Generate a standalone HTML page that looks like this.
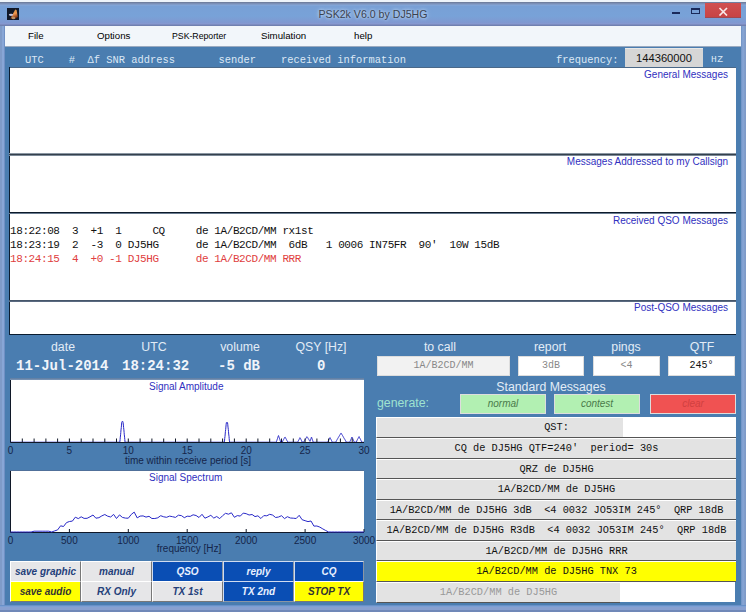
<!DOCTYPE html>
<html><head><meta charset="utf-8">
<style>
*{margin:0;padding:0;box-sizing:border-box}
html,body{width:746px;height:612px;overflow:hidden;background:linear-gradient(90deg,#7F9BC8 0,#7F9BC8 2px,#88A6D6 2px,#88A6D6 4px,#7090C4 4px,#7090C4 5px,transparent 5px,transparent 741px,#6E92C4 741px,#88A6D6 743px,#7F9BC8 745px),#7F9FD9;font-family:"Liberation Sans",sans-serif}
.a{position:absolute}
.mono{font-family:"Liberation Mono",monospace}
#topw{left:0;top:0;width:746px;height:2px;background:#EEF4FA}
#topl{left:0;top:2px;width:746px;height:1px;background:#6F7F9F}
#title{left:0;top:3px;width:746px;height:23px;background:linear-gradient(#7A8CB4 0px,#7A90B8 1px,#88A8D8 2px,#78A0D6 3px,#78A2D8 13px,#8098D0 20px,#8A98D0 21px,#7080B0 22px,#7080B0 23px)}
#ttxt{left:0;top:8px;width:746px;text-align:center;font-size:10.6px;color:#3A4250;white-space:nowrap;text-shadow:0 0 3px rgba(220,235,255,0.9),0 0 5px rgba(220,235,255,0.6)}
#menu{left:5px;top:26px;width:736px;height:21px;background:#F2F6FA}
.mi{top:30px;font-size:9.7px;color:#000;white-space:nowrap}
#panel{left:5px;top:47px;width:736px;height:558px;background:#4A7DB0}
.hdr{font-size:10.42px;color:#DCE8F5;white-space:pre;top:54px}
.lb{left:9px;width:728px;background:#fff;border:1px solid #18283A}
.lbl{font-size:10px;color:#3030C0;right:18px;white-space:nowrap}
.row{font-size:11px;letter-spacing:-0.41px;white-space:pre;left:10px;color:#111}
.lab{font-size:12.3px;color:#E2ECF6;white-space:nowrap;text-align:center}
.val{font-size:14px;font-weight:bold;color:#F0F4FA;white-space:pre}
.plot{left:10px;width:354px;background:#fff}
.tick{font-size:10px;line-height:10px;width:40px;text-align:center;color:#15254A;white-space:nowrap}
.btn{font-size:10px;font-weight:bold;font-style:italic;text-align:center;line-height:19px;height:21px;color:#24407A;background:#E6E6E8;border-top:1px solid #fff;border-left:1px solid #fff;border-right:1px solid #777;border-bottom:1px solid #777}
.bb{background:#0A4EB4;color:#E8F0FF;border-color:#D0DCF0 #8A96A4 #8A96A4 #D0DCF0}
.by{background:#FFFF00;color:#333}
.msg{left:376px;width:360px;height:21px;background:#E3E3E3;border-top:1px solid #fff;border-left:1px solid #fff;border-bottom:1px solid #555;text-align:center;font-size:10.3px;line-height:19px;white-space:pre;color:#111}
.box{background:#F2F2F2;border:1px solid #DDD;text-align:center;font-size:10px;line-height:18px;color:#888}
</style></head><body>
<div class="a" id="topw"></div>
<div class="a" id="topl"></div>
<div class="a" id="title"></div>
<!-- icon -->
<div class="a" style="left:7px;top:8px;width:12px;height:12px;background:#101828"></div>
<svg class="a" style="left:7px;top:8px" width="12" height="12"><defs><linearGradient id="ig" x1="0" y1="0" x2="0.3" y2="1"><stop offset="0" stop-color="#C89040"/><stop offset="0.55" stop-color="#F09850"/><stop offset="1" stop-color="#803010"/></linearGradient></defs><path d="M3.5 10.5 L8.2 1.5 L9.6 2 L10.8 9 L7.5 11 Z" fill="url(#ig)"/><ellipse cx="4" cy="6.8" rx="2.2" ry="1.1" fill="#C8C8E0"/><ellipse cx="6.5" cy="10" rx="1.8" ry="1.2" fill="#B89068"/></svg>
<div class="a" id="ttxt">PSK2k V6.0 by DJ5HG</div>
<!-- window buttons -->
<div class="a" style="left:672px;top:12px;width:8px;height:2px;background:#1A2A5A"></div>
<div class="a" style="left:691px;top:8px;width:9px;height:6px;border:1px solid #1A2A5A;border-top-width:2px"></div>
<div class="a" style="left:705px;top:3px;width:36px;height:15px;background:linear-gradient(#D05050,#C84444);border-bottom:1px solid #A04850"></div>
<svg class="a" style="left:718px;top:7px" width="11" height="9"><path d="M1.5 1 L9 8.5 M9 1 L1.5 8.5" stroke="#F8E8E8" stroke-width="1.7"/></svg>

<div class="a" id="menu"></div>
<div class="a" style="left:5px;top:46px;width:736px;height:1px;background:#9AAAC0"></div>
<div class="a mi" style="left:28px">File</div>
<div class="a mi" style="left:97px">Options</div>
<div class="a mi" style="left:172px;transform:scaleX(0.9);transform-origin:0 0">PSK-Reporter</div>
<div class="a mi" style="left:261px">Simulation</div>
<div class="a mi" style="left:354px">help</div>

<div class="a" id="panel"></div>
<div class="a" style="left:0;top:605px;width:746px;height:7px;background:linear-gradient(#6890C8 0,#6890C8 1px,#7CA0D4 1px,#7CA0D4 2px,#88A0D0 2px,#88A0D0 5px,#7088B8 5px)"></div>
<div class="a" style="left:10px;top:378px;width:354px;height:2px;background:linear-gradient(#5A7AA0,#8098B8)"></div>
<div class="a" style="left:10px;top:470px;width:354px;height:1px;background:#50709A"></div>
<div class="a hdr mono" style="left:25px">UTC    #  Δf SNR address       sender    received information</div>
<div class="a hdr mono" style="left:556px">frequency:</div>
<div class="a" style="left:625px;top:48px;width:78px;height:19px;background:#D6D6D6;border-top:1px solid #E8E8E8;font-size:11.2px;text-align:center;line-height:18px;color:#111">144360000</div>
<div class="a hdr mono" style="left:711px;font-size:9.6px;letter-spacing:0.6px;top:54px">HZ</div>

<div class="a" style="left:10px;top:68px;width:726px;height:266px;background:#fff"></div>
<div class="a" style="left:9px;top:67px;width:727px;height:1px;background:#4A6888"></div>
<div class="a" style="left:9px;top:67px;width:1px;height:268px;background:#0A1C30"></div>
<div class="a" style="left:9px;top:153px;width:727px;height:1px;background:#8A96A2"></div>
<div class="a" style="left:9px;top:154px;width:727px;height:1px;background:#34404C"></div>
<div class="a" style="left:9px;top:155px;width:727px;height:1px;background:#7A8896"></div>
<div class="a" style="left:9px;top:212px;width:727px;height:1px;background:#0C1A2A"></div>
<div class="a" style="left:9px;top:213px;width:727px;height:1px;background:#6A7C90"></div>
<div class="a" style="left:9px;top:300px;width:727px;height:1px;background:#46566A"></div>
<div class="a" style="left:9px;top:301px;width:727px;height:1px;background:#5A6A80"></div>
<div class="a" style="left:9px;top:334px;width:727px;height:1px;background:#0A1C30"></div>
<div class="a lbl" style="top:69px">General Messages</div>
<div class="a lbl" style="top:156px">Messages Addressed to my Callsign</div>
<div class="a lbl" style="top:215px">Received QSO Messages</div>
<div class="a row mono" style="top:225px">18:22:08  3  +1  1     CQ     de 1A/B2CD/MM rx1st</div>
<div class="a row mono" style="top:239px">18:23:19  2  -3  0 DJ5HG      de 1A/B2CD/MM  6dB   1 0006 IN75FR  90'  10W 15dB</div>
<div class="a row mono" style="top:253px;color:#E04040">18:24:15  4  +0 -1 DJ5HG      de 1A/B2CD/MM RRR</div>
<div class="a lbl" style="top:302px">Post-QSO Messages</div>

<!-- labels -->
<div class="a lab" style="left:33px;top:340px;width:60px">date</div>
<div class="a lab" style="left:124px;top:340px;width:60px">UTC</div>
<div class="a lab" style="left:210px;top:340px;width:60px">volume</div>
<div class="a lab" style="left:291px;top:340px;width:60px">QSY [Hz]</div>
<div class="a val mono" style="left:16px;top:358px">11-Jul-2014</div>
<div class="a val mono" style="left:122px;top:358px">18:24:32</div>
<div class="a val mono" style="left:218px;top:358px">-5 dB</div>
<div class="a val mono" style="left:317px;top:358px">0</div>

<!-- amplitude plot -->
<svg class="a" style="left:0;top:0" width="746" height="612" viewBox="0 0 746 612">
<rect x="11" y="380" width="353" height="62" fill="#fff"/>
<polyline points="10.5,442.2 10.7,442.2 11.0,442.2 11.2,442.2 11.4,442.2 11.7,442.2 11.9,442.2 12.1,442.2 12.4,442.2 12.6,442.2 12.9,442.2 13.1,442.2 13.3,442.2 13.6,442.2 13.8,442.2 14.0,442.2 14.3,442.2 14.5,442.2 14.7,442.2 15.0,442.2 15.2,442.2 15.4,442.2 15.7,442.2 15.9,442.2 16.2,442.2 16.4,442.2 16.6,442.2 16.9,442.2 17.1,442.2 17.3,442.2 17.6,442.2 17.8,442.2 18.0,442.2 18.3,442.2 18.5,442.2 18.7,442.2 19.0,442.2 19.2,442.2 19.5,442.2 19.7,442.2 19.9,442.2 20.2,442.2 20.4,442.2 20.6,442.2 20.9,442.2 21.1,442.2 21.3,442.2 21.6,442.2 21.8,442.2 22.0,442.2 22.3,442.2 22.5,442.2 22.8,442.2 23.0,442.2 23.2,442.2 23.5,442.2 23.7,442.2 23.9,442.2 24.2,442.2 24.4,442.2 24.6,442.2 24.9,442.2 25.1,442.2 25.3,442.2 25.6,442.2 25.8,442.2 26.1,442.2 26.3,442.2 26.5,442.2 26.8,442.2 27.0,442.2 27.2,442.2 27.5,442.2 27.7,442.2 27.9,442.2 28.2,442.2 28.4,442.2 28.6,442.2 28.9,442.2 29.1,442.2 29.4,442.2 29.6,442.2 29.8,442.2 30.1,442.2 30.3,442.2 30.5,442.2 30.8,442.2 31.0,442.2 31.2,442.2 31.5,442.2 31.7,442.2 31.9,442.2 32.2,442.2 32.4,442.2 32.7,442.2 32.9,442.2 33.1,442.2 33.4,442.2 33.6,442.2 33.8,442.2 34.1,442.2 34.3,442.2 34.5,442.2 34.8,442.2 35.0,442.2 35.2,442.2 35.5,442.2 35.7,442.2 36.0,442.2 36.2,442.2 36.4,442.2 36.7,442.2 36.9,442.2 37.1,442.2 37.4,442.2 37.6,442.2 37.8,442.2 38.1,442.2 38.3,442.2 38.5,442.2 38.8,442.2 39.0,442.2 39.3,442.2 39.5,442.2 39.7,442.2 40.0,442.2 40.2,442.2 40.4,442.2 40.7,442.2 40.9,442.2 41.1,442.2 41.4,442.2 41.6,442.2 41.8,442.2 42.1,442.2 42.3,442.2 42.6,442.2 42.8,442.2 43.0,442.2 43.3,442.2 43.5,442.2 43.7,442.2 44.0,442.2 44.2,442.2 44.4,442.2 44.7,442.2 44.9,442.2 45.1,442.2 45.4,442.2 45.6,442.2 45.9,442.2 46.1,442.2 46.3,442.2 46.6,442.2 46.8,442.2 47.0,442.2 47.3,442.2 47.5,442.2 47.7,442.2 48.0,442.2 48.2,442.2 48.4,442.2 48.7,442.2 48.9,442.2 49.1,442.2 49.4,442.2 49.6,442.2 49.9,442.2 50.1,442.2 50.3,442.2 50.6,442.2 50.8,442.2 51.0,442.2 51.3,442.2 51.5,442.2 51.7,442.2 52.0,442.2 52.2,442.2 52.4,442.2 52.7,442.2 52.9,442.2 53.2,442.2 53.4,442.2 53.6,442.2 53.9,442.2 54.1,442.2 54.3,442.2 54.6,442.2 54.8,442.2 55.0,442.2 55.3,442.2 55.5,442.2 55.7,442.2 56.0,442.2 56.2,442.2 56.5,442.2 56.7,442.2 56.9,442.2 57.2,442.2 57.4,442.2 57.6,442.2 57.9,442.2 58.1,442.2 58.3,442.2 58.6,442.2 58.8,442.2 59.0,442.2 59.3,442.2 59.5,442.2 59.8,442.2 60.0,442.2 60.2,442.2 60.5,442.2 60.7,442.2 60.9,442.2 61.2,442.2 61.4,442.2 61.6,442.2 61.9,442.2 62.1,442.2 62.3,442.2 62.6,442.2 62.8,442.2 63.1,442.2 63.3,442.2 63.5,442.2 63.8,442.2 64.0,442.2 64.2,442.2 64.5,442.2 64.7,442.2 64.9,442.2 65.2,442.2 65.4,442.2 65.6,442.2 65.9,442.2 66.1,442.2 66.4,442.2 66.6,442.2 66.8,442.2 67.1,442.2 67.3,442.2 67.5,442.2 67.8,442.2 68.0,442.2 68.2,442.2 68.5,442.2 68.7,442.2 68.9,442.2 69.2,442.2 69.4,442.2 69.7,442.2 69.9,442.2 70.1,442.2 70.4,442.2 70.6,442.2 70.8,442.2 71.1,442.2 71.3,442.2 71.5,442.2 71.8,442.2 72.0,442.2 72.2,442.2 72.5,442.2 72.7,442.2 73.0,442.2 73.2,442.2 73.4,442.2 73.7,442.2 73.9,442.2 74.1,442.2 74.4,442.2 74.6,442.2 74.8,442.2 75.1,442.2 75.3,442.2 75.5,442.2 75.8,442.2 76.0,442.2 76.3,442.2 76.5,442.2 76.7,442.2 77.0,442.2 77.2,442.2 77.4,442.2 77.7,442.2 77.9,442.2 78.1,442.2 78.4,442.2 78.6,442.2 78.8,442.2 79.1,442.2 79.3,442.2 79.6,442.2 79.8,442.2 80.0,442.2 80.3,442.2 80.5,442.2 80.7,442.2 81.0,442.2 81.2,442.2 81.4,442.2 81.7,442.2 81.9,442.2 82.1,442.2 82.4,442.2 82.6,442.2 82.8,442.2 83.1,442.2 83.3,442.2 83.6,442.2 83.8,442.2 84.0,442.2 84.3,442.2 84.5,442.2 84.7,442.2 85.0,442.2 85.2,442.2 85.4,442.2 85.7,442.2 85.9,442.2 86.1,442.2 86.4,442.2 86.6,442.2 86.9,442.2 87.1,442.2 87.3,442.2 87.6,442.2 87.8,442.2 88.0,442.2 88.3,442.2 88.5,442.2 88.7,442.2 89.0,442.2 89.2,442.2 89.4,442.2 89.7,442.2 89.9,442.2 90.2,442.2 90.4,442.2 90.6,442.2 90.9,442.2 91.1,442.2 91.3,442.2 91.6,442.2 91.8,442.2 92.0,442.2 92.3,442.2 92.5,442.2 92.7,442.2 93.0,442.2 93.2,442.2 93.5,442.2 93.7,442.2 93.9,442.2 94.2,442.2 94.4,442.2 94.6,442.2 94.9,442.2 95.1,442.2 95.3,442.2 95.6,442.2 95.8,442.2 96.0,442.2 96.3,442.2 96.5,442.2 96.8,442.2 97.0,442.2 97.2,442.2 97.5,442.2 97.7,442.2 97.9,442.2 98.2,442.2 98.4,442.2 98.6,442.2 98.9,442.2 99.1,442.2 99.3,442.2 99.6,442.2 99.8,442.2 100.1,442.2 100.3,442.2 100.5,442.2 100.8,442.2 101.0,442.2 101.2,442.2 101.5,442.2 101.7,442.2 101.9,442.2 102.2,442.2 102.4,442.2 102.6,442.2 102.9,442.2 103.1,442.2 103.4,442.2 103.6,442.2 103.8,442.2 104.1,442.2 104.3,442.2 104.5,442.2 104.8,442.2 105.0,442.2 105.2,442.2 105.5,442.2 105.7,442.2 105.9,442.2 106.2,442.2 106.4,442.2 106.7,442.2 106.9,442.2 107.1,442.2 107.4,442.2 107.6,442.2 107.8,442.2 108.1,442.2 108.3,442.2 108.5,442.2 108.8,442.2 109.0,442.2 109.2,442.2 109.5,442.2 109.7,442.2 110.0,442.2 110.2,442.2 110.4,442.2 110.7,442.2 110.9,442.2 111.1,442.2 111.4,442.2 111.6,442.2 111.8,442.2 112.1,442.2 112.3,442.2 112.5,442.2 112.8,442.2 113.0,442.2 113.3,442.2 113.5,442.2 113.7,442.2 114.0,442.2 114.2,442.2 114.4,442.2 114.7,442.2 114.9,442.2 115.1,442.2 115.4,442.2 115.6,442.2 115.8,442.2 116.1,442.2 116.3,442.2 116.5,442.2 116.8,442.2 117.0,442.2 117.3,442.2 117.5,442.2 117.7,442.2 118.0,442.2 118.2,442.2 118.4,442.2 118.7,442.2 118.9,442.2 119.1,442.2 119.4,442.2 119.6,442.2 119.8,442.2 120.1,439.6 120.3,437.2 120.6,434.8 120.8,432.4 121.0,429.9 121.3,427.5 121.5,425.1 121.7,422.7 122.0,421.5 122.2,421.5 122.4,421.5 122.7,421.5 122.9,421.5 123.1,422.7 123.4,425.1 123.6,427.5 123.9,429.9 124.1,432.4 124.3,434.8 124.6,437.2 124.8,439.6 125.0,442.0 125.3,442.2 125.5,442.2 125.7,442.2 126.0,442.2 126.2,442.2 126.4,442.2 126.7,442.2 126.9,442.2 127.2,442.2 127.4,442.2 127.6,442.2 127.9,442.2 128.1,442.2 128.3,442.2 128.6,442.2 128.8,442.2 129.0,442.2 129.3,442.2 129.5,442.2 129.7,442.2 130.0,442.2 130.2,442.2 130.5,442.2 130.7,442.2 130.9,442.2 131.2,442.2 131.4,442.2 131.6,442.2 131.9,442.2 132.1,442.2 132.3,442.2 132.6,442.2 132.8,442.2 133.0,442.2 133.3,442.2 133.5,442.2 133.8,442.2 134.0,442.2 134.2,442.2 134.5,442.2 134.7,442.2 134.9,442.2 135.2,442.2 135.4,442.2 135.6,442.2 135.9,442.2 136.1,442.2 136.3,442.2 136.6,442.2 136.8,442.2 137.1,442.2 137.3,442.2 137.5,442.2 137.8,442.2 138.0,442.2 138.2,442.2 138.5,442.2 138.7,442.2 138.9,442.2 139.2,442.2 139.4,442.2 139.6,442.2 139.9,442.2 140.1,442.2 140.4,442.2 140.6,442.2 140.8,442.2 141.1,442.2 141.3,442.2 141.5,442.2 141.8,442.2 142.0,442.2 142.2,442.2 142.5,442.2 142.7,442.2 142.9,442.2 143.2,442.2 143.4,442.2 143.7,442.2 143.9,442.2 144.1,442.2 144.4,442.2 144.6,442.2 144.8,442.2 145.1,442.2 145.3,442.2 145.5,442.2 145.8,442.2 146.0,442.2 146.2,442.2 146.5,442.2 146.7,442.2 147.0,442.2 147.2,442.2 147.4,442.2 147.7,442.2 147.9,442.2 148.1,442.2 148.4,442.2 148.6,442.2 148.8,442.2 149.1,442.2 149.3,442.2 149.5,442.2 149.8,442.2 150.0,442.2 150.3,442.2 150.5,442.2 150.7,442.2 151.0,442.2 151.2,442.2 151.4,442.2 151.7,442.2 151.9,442.2 152.1,442.2 152.4,442.2 152.6,442.2 152.8,442.2 153.1,442.2 153.3,442.2 153.5,442.2 153.8,442.2 154.0,442.2 154.3,442.2 154.5,442.2 154.7,442.2 155.0,442.2 155.2,442.2 155.4,442.2 155.7,442.2 155.9,442.2 156.1,442.2 156.4,442.2 156.6,442.2 156.8,442.2 157.1,442.2 157.3,442.2 157.6,442.2 157.8,442.2 158.0,442.2 158.3,442.2 158.5,442.2 158.7,442.2 159.0,442.2 159.2,442.2 159.4,442.2 159.7,442.2 159.9,442.2 160.1,442.2 160.4,442.2 160.6,442.2 160.9,442.2 161.1,442.2 161.3,442.2 161.6,442.2 161.8,442.2 162.0,442.2 162.3,442.2 162.5,442.2 162.7,442.2 163.0,442.2 163.2,442.2 163.4,442.2 163.7,442.2 163.9,442.2 164.2,442.2 164.4,442.2 164.6,442.2 164.9,442.2 165.1,442.2 165.3,442.2 165.6,442.2 165.8,442.2 166.0,442.2 166.3,442.2 166.5,442.2 166.7,442.2 167.0,442.2 167.2,442.2 167.5,442.2 167.7,442.2 167.9,442.2 168.2,442.2 168.4,442.2 168.6,442.2 168.9,442.2 169.1,442.2 169.3,442.2 169.6,442.2 169.8,442.2 170.0,442.2 170.3,442.2 170.5,442.2 170.8,442.2 171.0,442.2 171.2,442.2 171.5,442.2 171.7,442.2 171.9,442.2 172.2,442.2 172.4,442.2 172.6,442.2 172.9,442.2 173.1,442.2 173.3,442.2 173.6,442.2 173.8,442.2 174.1,442.2 174.3,442.2 174.5,442.2 174.8,442.2 175.0,442.2 175.2,442.2 175.5,442.2 175.7,442.2 175.9,442.2 176.2,442.2 176.4,442.2 176.6,442.2 176.9,442.2 177.1,442.2 177.4,442.2 177.6,442.2 177.8,442.2 178.1,442.2 178.3,442.2 178.5,442.2 178.8,442.2 179.0,442.2 179.2,442.2 179.5,442.2 179.7,442.2 179.9,442.2 180.2,442.2 180.4,442.2 180.7,442.2 180.9,442.2 181.1,442.2 181.4,442.2 181.6,442.2 181.8,442.2 182.1,442.2 182.3,442.2 182.5,442.2 182.8,442.2 183.0,442.2 183.2,442.2 183.5,442.2 183.7,442.2 184.0,442.2 184.2,442.2 184.4,442.2 184.7,442.2 184.9,442.2 185.1,442.2 185.4,442.2 185.6,442.2 185.8,442.2 186.1,442.2 186.3,442.2 186.5,442.2 186.8,442.2 187.0,442.2 187.2,442.2 187.5,442.2 187.7,442.2 188.0,442.2 188.2,442.2 188.4,442.2 188.7,442.2 188.9,442.2 189.1,442.2 189.4,442.2 189.6,442.2 189.8,442.2 190.1,442.2 190.3,442.2 190.5,442.2 190.8,442.2 191.0,442.2 191.3,442.2 191.5,442.2 191.7,442.2 192.0,442.2 192.2,442.2 192.4,442.2 192.7,442.2 192.9,442.2 193.1,442.2 193.4,442.2 193.6,442.2 193.8,442.2 194.1,442.2 194.3,442.2 194.6,442.2 194.8,442.2 195.0,442.2 195.3,442.2 195.5,442.2 195.7,442.2 196.0,442.2 196.2,442.2 196.4,442.2 196.7,442.2 196.9,442.2 197.1,442.2 197.4,442.2 197.6,442.2 197.9,442.2 198.1,442.2 198.3,442.2 198.6,442.2 198.8,442.2 199.0,442.2 199.3,442.2 199.5,442.2 199.7,442.2 200.0,442.2 200.2,442.2 200.4,442.2 200.7,442.2 200.9,442.2 201.2,442.2 201.4,442.2 201.6,442.2 201.9,442.2 202.1,442.2 202.3,442.2 202.6,442.2 202.8,442.2 203.0,442.2 203.3,442.2 203.5,442.2 203.7,442.2 204.0,442.2 204.2,442.2 204.5,442.2 204.7,442.2 204.9,442.2 205.2,442.2 205.4,442.2 205.6,442.2 205.9,442.2 206.1,442.2 206.3,442.2 206.6,442.2 206.8,442.2 207.0,442.2 207.3,442.2 207.5,442.2 207.8,442.2 208.0,442.2 208.2,442.2 208.5,442.2 208.7,442.2 208.9,442.2 209.2,442.2 209.4,442.2 209.6,442.2 209.9,442.2 210.1,442.2 210.3,442.2 210.6,442.2 210.8,442.2 211.1,442.2 211.3,442.2 211.5,442.2 211.8,442.2 212.0,442.2 212.2,442.2 212.5,442.2 212.7,442.2 212.9,442.2 213.2,442.2 213.4,442.2 213.6,442.2 213.9,442.2 214.1,442.2 214.4,442.2 214.6,442.2 214.8,442.2 215.1,442.2 215.3,442.2 215.5,442.2 215.8,442.2 216.0,442.2 216.2,442.2 216.5,442.2 216.7,442.2 216.9,442.2 217.2,442.2 217.4,442.2 217.7,442.2 217.9,442.2 218.1,442.2 218.4,442.2 218.6,442.2 218.8,442.2 219.1,442.2 219.3,442.2 219.5,442.2 219.8,442.2 220.0,442.2 220.2,442.2 220.5,442.2 220.7,442.2 221.0,442.2 221.2,442.2 221.4,442.2 221.7,442.2 221.9,442.2 222.1,442.2 222.4,442.2 222.6,442.2 222.8,442.2 223.1,442.2 223.3,442.2 223.5,442.2 223.8,442.2 224.0,442.2 224.2,442.2 224.5,440.9 224.7,438.6 225.0,436.3 225.2,434.0 225.4,431.7 225.7,429.4 225.9,427.1 226.1,424.8 226.4,422.5 226.6,422.5 226.8,422.5 227.1,422.5 227.3,422.5 227.5,422.5 227.8,424.8 228.0,427.1 228.3,429.4 228.5,431.7 228.7,434.0 229.0,436.3 229.2,438.6 229.4,440.9 229.7,442.2 229.9,442.2 230.1,442.2 230.4,442.2 230.6,442.2 230.8,442.2 231.1,442.2 231.3,442.2 231.6,442.2 231.8,442.2 232.0,442.2 232.3,442.2 232.5,442.2 232.7,442.2 233.0,442.2 233.2,442.2 233.4,442.2 233.7,442.2 233.9,442.2 234.1,442.2 234.4,442.2 234.6,442.2 234.9,442.2 235.1,442.2 235.3,442.2 235.6,442.2 235.8,442.2 236.0,442.2 236.3,442.2 236.5,442.2 236.7,442.2 237.0,442.2 237.2,442.2 237.4,442.2 237.7,442.2 237.9,442.2 238.2,442.2 238.4,442.2 238.6,442.2 238.9,442.2 239.1,442.2 239.3,442.2 239.6,442.2 239.8,442.2 240.0,442.2 240.3,442.2 240.5,442.2 240.7,442.2 241.0,442.2 241.2,442.2 241.5,442.2 241.7,442.2 241.9,442.2 242.2,442.2 242.4,442.2 242.6,442.2 242.9,442.2 243.1,442.2 243.3,442.2 243.6,442.2 243.8,442.2 244.0,442.2 244.3,442.2 244.5,442.2 244.8,442.2 245.0,442.2 245.2,442.2 245.5,442.2 245.7,442.2 245.9,442.2 246.2,442.2 246.4,442.2 246.6,442.2 246.9,442.2 247.1,442.2 247.3,442.2 247.6,442.2 247.8,442.2 248.1,442.2 248.3,442.2 248.5,442.2 248.8,442.2 249.0,442.2 249.2,442.2 249.5,442.2 249.7,442.2 249.9,442.2 250.2,442.2 250.4,442.2 250.6,442.2 250.9,442.2 251.1,442.2 251.4,442.2 251.6,442.2 251.8,442.2 252.1,442.2 252.3,442.2 252.5,442.2 252.8,442.2 253.0,442.2 253.2,442.2 253.5,442.2 253.7,442.2 253.9,442.2 254.2,442.2 254.4,442.2 254.7,442.2 254.9,442.2 255.1,442.2 255.4,442.2 255.6,442.2 255.8,442.2 256.1,442.2 256.3,442.2 256.5,442.2 256.8,442.2 257.0,442.2 257.2,442.2 257.5,442.2 257.7,442.2 257.9,442.2 258.2,442.2 258.4,442.2 258.7,442.2 258.9,442.2 259.1,442.2 259.4,442.2 259.6,442.2 259.8,442.2 260.1,442.2 260.3,442.2 260.5,442.2 260.8,442.2 261.0,442.2 261.2,442.2 261.5,442.2 261.7,442.2 262.0,442.2 262.2,442.2 262.4,442.2 262.7,442.2 262.9,442.2 263.1,442.2 263.4,442.2 263.6,442.2 263.8,442.2 264.1,442.2 264.3,442.2 264.5,442.2 264.8,442.2 265.0,442.2 265.3,442.2 265.5,442.2 265.7,442.2 266.0,442.2 266.2,442.2 266.4,442.2 266.7,442.2 266.9,442.2 267.1,442.2 267.4,442.2 267.6,442.2 267.8,442.2 268.1,442.2 268.3,442.2 268.6,442.2 268.8,442.2 269.0,442.2 269.3,442.2 269.5,442.2 269.7,442.2 270.0,442.2 270.2,442.2 270.4,442.2 270.7,442.2 270.9,442.2 271.1,442.2 271.4,442.2 271.6,442.2 271.9,442.2 272.1,442.2 272.3,442.2 272.6,442.2 272.8,442.2 273.0,442.2 273.3,442.2 273.5,442.2 273.7,442.2 274.0,442.2 274.2,442.2 274.4,442.2 274.7,442.2 274.9,442.2 275.2,442.2 275.4,442.2 275.6,442.2 275.9,442.2 276.1,442.2 276.3,442.2 276.6,441.3 276.8,440.6 277.0,439.9 277.3,439.2 277.5,438.5 277.7,437.8 278.0,437.1 278.2,436.3 278.5,435.6 278.7,436.1 278.9,436.8 279.2,437.5 279.4,438.2 279.6,438.9 279.9,439.6 280.1,440.3 280.3,441.0 280.6,442.2 280.8,442.2 281.0,442.2 281.3,442.2 281.5,442.2 281.8,442.2 282.0,442.2 282.2,442.2 282.5,442.2 282.7,441.1 282.9,440.7 283.2,440.3 283.4,439.9 283.6,439.5 283.9,439.0 284.1,438.6 284.3,438.2 284.6,437.8 284.8,437.3 285.1,437.1 285.3,437.5 285.5,437.9 285.8,438.4 286.0,438.8 286.2,439.2 286.5,439.6 286.7,440.1 286.9,440.5 287.2,440.9 287.4,441.3 287.6,442.2 287.9,442.2 288.1,442.2 288.4,442.2 288.6,442.2 288.8,442.2 289.1,442.2 289.3,442.2 289.5,442.2 289.8,442.2 290.0,442.2 290.2,442.2 290.5,442.2 290.7,442.2 290.9,442.2 291.2,442.2 291.4,442.2 291.7,442.2 291.9,442.2 292.1,442.2 292.4,442.2 292.6,442.2 292.8,442.2 293.1,442.2 293.3,442.2 293.5,442.2 293.8,442.2 294.0,442.2 294.2,442.2 294.5,442.2 294.7,442.2 294.9,442.2 295.2,442.2 295.4,442.2 295.7,442.2 295.9,442.2 296.1,442.2 296.4,442.2 296.6,442.2 296.8,442.2 297.1,442.2 297.3,442.2 297.5,442.2 297.8,442.2 298.0,441.5 298.2,441.0 298.5,440.5 298.7,440.1 299.0,439.6 299.2,439.1 299.4,438.6 299.7,438.2 299.9,437.7 300.1,437.8 300.4,438.2 300.6,438.7 300.8,439.2 301.1,439.7 301.3,440.1 301.5,440.6 301.8,441.1 302.0,442.2 302.3,442.2 302.5,442.2 302.7,442.2 303.0,442.2 303.2,442.2 303.4,442.2 303.7,442.2 303.9,442.2 304.1,441.3 304.4,440.9 304.6,440.5 304.8,440.1 305.1,439.7 305.3,439.3 305.6,438.9 305.8,438.5 306.0,438.1 306.3,437.7 306.5,437.3 306.7,436.9 307.0,436.6 307.2,436.8 307.4,437.2 307.7,437.6 307.9,438.0 308.1,438.4 308.4,438.8 308.6,439.2 308.9,439.6 309.1,440.0 309.3,440.4 309.6,440.8 309.8,441.2 310.0,441.4 310.3,440.7 310.5,440.0 310.7,439.3 311.0,438.6 311.2,437.9 311.4,437.2 311.7,437.5 311.9,438.3 312.2,439.0 312.4,439.7 312.6,440.4 312.9,441.1 313.1,442.2 313.3,442.2 313.6,442.2 313.8,442.2 314.0,442.2 314.3,442.2 314.5,442.2 314.7,442.2 315.0,442.2 315.2,442.2 315.5,442.2 315.7,442.2 315.9,442.2 316.2,442.2 316.4,442.2 316.6,442.2 316.9,442.2 317.1,442.2 317.3,442.2 317.6,442.2 317.8,442.2 318.0,442.2 318.3,442.2 318.5,442.2 318.8,442.2 319.0,442.2 319.2,442.2 319.5,442.2 319.7,442.2 319.9,442.2 320.2,442.2 320.4,442.2 320.6,442.2 320.9,442.2 321.1,442.2 321.3,442.2 321.6,442.2 321.8,442.2 322.1,442.2 322.3,442.2 322.5,442.2 322.8,442.2 323.0,442.2 323.2,442.2 323.5,442.2 323.7,442.2 323.9,442.2 324.2,442.2 324.4,442.2 324.6,442.2 324.9,442.2 325.1,442.2 325.4,442.2 325.6,442.2 325.8,442.2 326.1,442.2 326.3,442.2 326.5,442.2 326.8,442.2 327.0,442.2 327.2,442.2 327.5,442.2 327.7,442.2 327.9,442.2 328.2,441.1 328.4,440.7 328.6,440.2 328.9,439.7 329.1,439.3 329.4,438.8 329.6,438.3 329.8,437.8 330.1,437.6 330.3,438.1 330.5,438.6 330.8,439.0 331.0,439.5 331.2,440.0 331.5,440.5 331.7,440.9 331.9,441.4 332.2,442.2 332.4,442.2 332.7,442.2 332.9,442.2 333.1,442.2 333.4,442.2 333.6,442.2 333.8,442.2 334.1,442.2 334.3,442.2 334.5,442.2 334.8,442.2 335.0,442.2 335.2,442.2 335.5,442.2 335.7,442.2 336.0,442.2 336.2,441.2 336.4,440.8 336.7,440.4 336.9,440.0 337.1,439.6 337.4,439.2 337.6,438.8 337.8,438.4 338.1,438.0 338.3,437.6 338.5,437.2 338.8,436.8 339.0,436.4 339.3,436.0 339.5,435.6 339.7,435.2 340.0,434.8 340.2,434.4 340.4,434.0 340.7,433.6 340.9,433.2 341.1,433.2 341.4,433.6 341.6,434.0 341.8,434.4 342.1,434.8 342.3,435.2 342.6,435.6 342.8,436.0 343.0,436.4 343.3,436.8 343.5,437.2 343.7,437.6 344.0,438.0 344.2,438.4 344.4,438.8 344.7,439.2 344.9,439.6 345.1,440.0 345.4,440.4 345.6,440.9 345.9,441.3 346.1,442.2 346.3,442.2 346.6,442.2 346.8,442.2 347.0,442.2 347.3,442.2 347.5,442.2 347.7,442.2 348.0,442.2 348.2,442.2 348.4,442.2 348.7,442.2 348.9,442.2 349.2,442.2 349.4,442.2 349.6,442.2 349.9,442.2 350.1,441.3 350.3,440.8 350.6,440.2 350.8,439.7 351.0,439.2 351.3,438.6 351.5,438.1 351.7,437.6 352.0,437.0 352.2,437.5 352.5,438.0 352.7,438.5 352.9,439.1 353.2,439.6 353.4,440.1 353.6,440.7 353.9,441.2 354.1,442.2 354.3,442.2 354.6,442.2 354.8,442.2 355.0,442.2 355.3,442.2 355.5,442.2 355.8,442.2 356.0,442.2 356.2,442.2 356.5,442.2 356.7,441.1 356.9,440.6 357.2,440.2 357.4,439.7 357.6,439.2 357.9,438.8 358.1,438.3 358.3,437.8 358.6,437.3 358.8,436.9 359.1,436.6 359.3,437.1 359.5,437.5 359.8,438.0 360.0,438.5 360.2,439.0 360.5,439.4 360.7,439.9 360.9,440.4 361.2,440.8 361.4,441.3 361.6,442.2 361.9,442.2 362.1,442.2 362.4,442.2 362.6,442.2 362.8,442.2 363.1,442.2 363.3,442.2 363.5,442.2 363.8,442.2 364.0,442.2" fill="none" stroke="#2828C8" stroke-width="1"/>
<path d="M10.5 380V442.5H364" stroke="#101828" stroke-width="1" fill="none"/>
<path d="M22.3 442V438.5M34.1 442V438.5M45.9 442V438.5M57.6 442V438.5M69.4 442V438.5M81.2 442V438.5M93.0 442V438.5M104.8 442V438.5M116.5 442V438.5M128.3 442V438.5M140.1 442V438.5M151.9 442V438.5M163.7 442V438.5M175.5 442V438.5M187.2 442V438.5M199.0 442V438.5M210.8 442V438.5M222.6 442V438.5M234.4 442V438.5M246.2 442V438.5M257.9 442V438.5M269.7 442V438.5M281.5 442V438.5M293.3 442V438.5M305.1 442V438.5M316.9 442V438.5M328.6 442V438.5M340.4 442V438.5M352.2 442V438.5" stroke="#101828" stroke-width="1"/>
<rect x="11" y="471" width="353" height="61" fill="#fff"/>
<path d="M10.5 471V532.5H364" stroke="#101828" stroke-width="1" fill="none"/>
<path d="M69.4 532V529M128.3 532V529M187.2 532V529M246.2 532V529M305.1 532V529M364.0 532V529" stroke="#101828" stroke-width="1"/>
<polyline points="10.5,532.0 13.4,532.0 16.4,532.0 19.3,532.0 22.3,532.0 25.2,532.0 28.2,532.0 31.1,532.0 34.1,531.2 37.0,531.2 40.0,531.2 42.9,531.2 45.9,531.2 48.8,531.2 51.7,532.0 54.7,530.9 57.6,529.9 60.6,525.8 63.5,526.5 66.5,522.6 69.4,521.5 72.4,521.1 75.3,517.2 78.3,518.6 81.2,516.8 84.1,518.4 87.1,518.3 90.0,516.8 93.0,515.0 95.9,518.2 98.9,517.7 101.8,515.9 104.8,514.5 107.7,516.2 110.7,517.0 113.6,514.4 116.5,518.5 119.5,514.9 122.4,517.4 125.4,518.1 128.3,518.2 131.3,514.4 134.2,512.1 137.2,517.9 140.1,516.1 143.1,515.9 146.0,517.1 149.0,516.3 151.9,518.5 154.8,518.5 157.8,517.8 160.7,515.7 163.7,516.8 166.6,517.3 169.6,516.1 172.5,516.7 175.5,517.4 178.4,515.2 181.4,515.6 184.3,517.7 187.2,516.2 190.2,516.4 193.1,514.8 196.1,515.5 199.0,517.5 202.0,514.3 204.9,518.2 207.9,516.9 210.8,515.3 213.8,518.1 216.7,516.5 219.7,518.6 222.6,515.7 225.5,513.3 228.5,514.2 231.4,512.8 234.4,517.3 237.3,515.6 240.3,516.1 243.2,513.1 246.2,513.7 249.1,515.0 252.1,514.5 255.0,516.6 257.9,515.8 260.9,518.5 263.8,515.6 266.8,515.8 269.7,514.3 272.7,515.1 275.6,517.5 278.6,517.0 281.5,515.7 284.5,518.6 287.4,516.7 290.4,518.0 293.3,518.2 296.2,518.5 299.2,515.3 302.1,519.7 305.1,520.7 308.0,521.6 311.0,521.0 313.9,526.1 316.9,526.0 319.8,527.1 322.8,528.9 325.7,530.5 328.6,532.0 331.6,532.0 334.5,532.0 337.5,532.0 340.4,532.0 343.4,532.0 346.3,532.0 349.3,532.0 352.2,532.0 355.2,532.0 358.1,532.0 361.1,532.0 364.0,532.0" fill="none" stroke="#2828C8" stroke-width="1"/>
</svg>
<div class="a lbl" style="left:149px;top:381px;right:auto">Signal Amplitude</div>

<!-- spectrum plot -->

<div class="a lbl" style="left:149px;top:472px;right:auto">Signal Spectrum</div>

<div class="a tick" style="left:-9.5px;top:446.4px">0</div>
<div class="a tick" style="left:49.4px;top:446.4px">5</div>
<div class="a tick" style="left:108.3px;top:446.4px">10</div>
<div class="a tick" style="left:167.2px;top:446.4px">15</div>
<div class="a tick" style="left:226.2px;top:446.4px">20</div>
<div class="a tick" style="left:285.1px;top:446.4px">25</div>
<div class="a tick" style="left:344.0px;top:446.4px">30</div>
<div class="a tick" style="left:88px;top:455.7px;width:200px">time within receive period [s]</div>
<div class="a tick" style="left:-9.5px;top:536.2px">0</div>
<div class="a tick" style="left:49.4px;top:536.2px">500</div>
<div class="a tick" style="left:108.3px;top:536.2px">1000</div>
<div class="a tick" style="left:167.2px;top:536.2px">1500</div>
<div class="a tick" style="left:226.2px;top:536.2px">2000</div>
<div class="a tick" style="left:285.1px;top:536.2px">2500</div>
<div class="a tick" style="left:344.0px;top:536.2px">3000</div>
<div class="a tick" style="left:89px;top:544px;width:200px">frequency [Hz]</div>
<!-- bottom buttons -->
<div class="a btn" style="left:10px;top:561px;line-height:20px;width:71px">save graphic</div>
<div class="a btn" style="left:81px;top:561px;line-height:20px;width:71px">manual</div>
<div class="a btn bb" style="left:152px;top:561px;line-height:20px;width:71px">QSO</div>
<div class="a btn bb" style="left:223px;top:561px;line-height:20px;width:71px">reply</div>
<div class="a btn bb" style="left:294px;top:561px;line-height:20px;width:70px">CQ</div>
<div class="a btn by" style="left:10px;top:581px;width:71px">save audio</div>
<div class="a btn" style="left:81px;top:581px;width:71px">RX Only</div>
<div class="a btn" style="left:152px;top:581px;width:71px">TX 1st</div>
<div class="a btn bb" style="left:223px;top:581px;width:71px">TX 2nd</div>
<div class="a btn by" style="left:294px;top:581px;width:70px">STOP TX</div>

<!-- right panel -->
<div class="a lab" style="left:410px;top:340px;width:60px">to call</div>
<div class="a lab" style="left:520px;top:340px;width:60px">report</div>
<div class="a lab" style="left:596px;top:340px;width:60px">pings</div>
<div class="a lab" style="left:672px;top:340px;width:60px">QTF</div>
<div class="a box mono" style="left:377px;top:356px;width:133px;height:20px">1A/B2CD/MM</div>
<div class="a box mono" style="left:518px;top:356px;width:66px;height:20px;background:#fff">3dB</div>
<div class="a box mono" style="left:593px;top:356px;width:67px;height:20px;background:#fff">&lt;4</div>
<div class="a box mono" style="left:668px;top:356px;width:67px;height:20px;background:#fff;color:#111">245°</div>
<div class="a lab" style="left:446px;top:380px;width:210px">Standard Messages</div>
<div class="a" style="left:377px;top:396px;font-size:12.3px;color:#9FE3D0">generate:</div>
<div class="a box" style="left:460px;top:394px;width:86px;height:20px;background:#B2F0B2;font-style:italic;color:#4A7A4A;font-size:10px">normal</div>
<div class="a box" style="left:554px;top:394px;width:86px;height:20px;background:#B2F0B2;font-style:italic;color:#4A7A4A;font-size:10px">contest</div>
<div class="a box" style="left:650px;top:394px;width:86px;height:20px;background:#F05252;font-style:italic;color:#D04040;font-size:10px">clear</div>

<div class="a msg mono" style="top:417px;height:21px;line-height:19px">QST:</div>
<div class="a" style="left:623px;top:418px;width:113px;height:19px;background:#fff"></div>
<div class="a msg mono" style="top:438px;height:21px;line-height:19px">CQ de DJ5HG QTF=240'  period= 30s</div>
<div class="a msg mono" style="top:459px;height:20px;line-height:18px">QRZ de DJ5HG</div>
<div class="a msg mono" style="top:479px;height:21px;line-height:19px">1A/B2CD/MM de DJ5HG</div>
<div class="a msg mono" style="top:500px;height:20px;line-height:18px">1A/B2CD/MM de DJ5HG 3dB  &lt;4 0032 JO53IM 245°  QRP 18dB</div>
<div class="a msg mono" style="top:520px;height:21px;line-height:19px">1A/B2CD/MM de DJ5HG R3dB  &lt;4 0032 JO53IM 245°  QRP 18dB</div>
<div class="a msg mono" style="top:541px;height:20px;line-height:18px">1A/B2CD/MM de DJ5HG RRR</div>
<div class="a msg mono" style="top:561px;height:21px;line-height:19px;background:#FFFF00">1A/B2CD/MM de DJ5HG TNX 73</div>
<div class="a msg mono" style="top:582px;height:21px;line-height:19px;color:#999;width:244px">1A/B2CD/MM de DJ5HG</div>
<div class="a" style="left:620px;top:582px;width:115px;height:20px;background:#fff"></div>
</body></html>
